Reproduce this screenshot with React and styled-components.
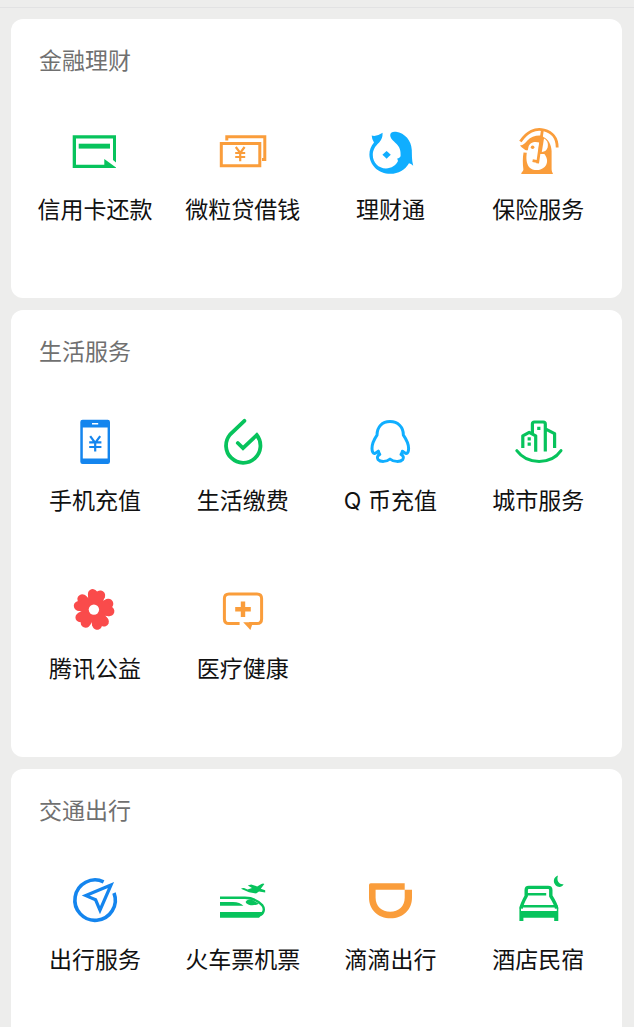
import styled, { createGlobalStyle } from "styled-components"

const GREEN = "#07c35c";
const ORANGE = "#fa9d3b";
const BLUE = "#1485ee";
const SKY = "#10aeff";
const RED = "#fa4b4b";

const GlobalStyle = createGlobalStyle`
    * {
        box-sizing: border-box;
    }
    body {
        margin: 0;
        background-color: #ededec;
        font-family: Inter, "Noto Sans CJK SC", sans-serif;
    }
`;
const Container = styled.main`
    display: flex;
    flex-direction: column;
    gap: 12px;
    padding: 0 12px 0 11px;
`;
const TopBar = styled.div`
    height: 8px;
    margin: 0 -12px -1px -11px;
    border-bottom: 1px solid #e2e2e3;
`;
const Card = styled.section`
    padding: 0 10px 10px;
    background-color: white;
    border-radius: 12px;
`;
const Title = styled.h2`
    height: 101px;
    margin: 0;
    padding: 24px 18px 0;
    color: #707070;
    font-size: 23px;
    font-weight: 400;
    line-height: 36px;
`;
const Grid = styled.nav`
    display: grid;
    grid-template-columns: repeat(4, 1fr);
`;
const Item = styled.a`
    height: 168px;
    display: flex;
    flex-direction: column;
    align-items: center;
    gap: 12px;
    color: #111;
    font-size: 23px;
    line-height: 36px;
    white-space: nowrap;
    text-decoration: none;
`;
const Icon = styled.svg`
    width: 60px;
    height: 60px;
    flex: none;
    color: ${(props) => props.$color};
    fill: none;
    stroke: currentColor;
    stroke-width: 3;

    .solid {
        fill: currentColor;
        stroke: none;
    }
    .hole {
        fill: white;
        stroke: none;
    }
`;

const CardIcon = () => (
    <>
        <path className="solid" d="M7.7 15.3H51V42.4L48 40V18.4H11V44.8H39.3V39L51 47.6V48H7.7Z" />
        <path className="solid" d="M13.7 23.7H45V28.6H13.7Z" />
    </>
);
const LoanIcon = () => (
    <>
        <path d="M8.3 23.6H46.8V45.8H8.3Z" />
        <path d="M13.8 20.5V16.8H51.8V39.4H49" />
        <path strokeWidth="2.2" d="M22.8 27L27.2 33L31.6 27M27.2 33V41.2M22.2 33H32.2M22.2 37H32.2" />
    </>
);
const WealthIcon = () => (
    <>
        <path className="solid" d="M11.7 15.6Q17 16.8 22.6 12.8Q22.8 18.6 19.2 22.6C15.4 26 12.8 30 12.8 35C12.8 42.6 18.4 48.4 26 48.4C31.4 48.4 36 45.4 38 41L37.2 38.6Q39 38.8 40.6 36.2C40.8 30.4 39.8 27.4 36.6 24C33 20.4 30.2 18.4 30.2 15C30.4 12.2 33 11.4 36 11.8C45 13.2 51.4 20.6 51.8 30C52 35 51.6 40 53.2 45.8Q51 43.4 49 43.2C45.2 49.8 38.4 53.8 30.4 53.8C18.4 53.8 9.6 45 9.4 34.4C9.4 30 11 25.8 14 22.4Q11.8 19.4 11.7 15.6Z" />
        <path className="solid" d="M26.6 31L28.6 32.8L30.8 34.8L28.6 36.8L26.6 38.8L24.6 36.8L22.4 34.8L24.6 32.8Z" />
    </>
);
const InsuranceIcon = () => (
    <>
        <path d="M12.4 21.6C18.6 11.8 27.4 7.6 36 10C44.4 12.2 49.2 18.6 49.2 27.4" strokeWidth="2.8" />
        <path className="solid" d="M12 25.6C15.4 25.2 17.4 23 19.4 20.6C23 16.6 28 15 34 15.6L35.4 17C40.4 19.4 43.4 24.6 43.6 31V49C43.6 51.4 44.4 52 45 54H13.2C13.2 52 15.4 51.4 15.4 49.4C14.6 43.6 14.6 37.4 15.6 32.2L18.6 31C16.4 29.6 14.2 28 12 25.6Z" />
        <path className="hole" d="M20.4 27.2C21.4 22.6 26.6 21 31.4 22.6L30 34H36.4C40 38.4 40 43.6 36.6 47C32.4 51.2 25 51 21.2 47.2C18.2 43.4 18 38 18.8 32.8L15.4 32.6V30.4L19.8 30.2Z" />
        <path className="hole" d="M36 18.6C39.6 20.4 40.4 24 39.6 27.4C38.8 30.2 37 31.6 33.8 32Z" />
        <path d="M34.4 10L29.6 43.4M24.6 40.6L30 41.6" strokeWidth="2.8" />
        <circle className="solid" cx="24.6" cy="27.2" r="1.8" />
    </>
);
const PhoneIcon = () => (
    <>
        <path className="solid" fillRule="evenodd" d="M17.6 8.7H42.7Q45 8.7 45 11V50.7Q45 53 42.7 53H17.6Q15.3 53 15.3 50.7V11Q15.3 8.7 17.6 8.7ZM17.8 16.4V47.4H42.6V16.4ZM27 11.9V13.4H33.2V11.9Z" />
        <path strokeWidth="2.2" d="M25.2 25.2L30.2 32L35.2 25.2M30.2 32V40.4M24.2 31.4H36.4M24.2 36H36.4" />
    </>
);
const BillIcon = () => (
    <path strokeWidth="3.8" strokeLinecap="round" d="M31.4 9.8L17 23.6A17.2 17.2 0 1 0 43.8 24L30 37.2L24.8 32" />
);
const QqIcon = () => (
    <path strokeLinejoin="round" d="M30 10.6C22.2 10.6 17 15.8 17 24.2C14.4 28 12 32.4 12 37.4C12 40.8 13.2 42.6 14.8 42.4C16 42.2 17 41.4 18.4 40.2C18.6 41.4 19 42.4 19.8 43.4C17.4 44.6 16.8 46.6 18 48.4C20.4 51.2 26.6 51 30 48C33.4 51 40.4 51.2 42.8 48.4C44 46.6 43.4 44.6 41 43.4C41.8 42.4 42.2 41.4 42.4 40.2C43.8 41.4 44.8 42.2 46 42.4C47.6 42.6 48.6 40.8 48.6 37.4C48.6 32.4 46 28 43.4 24.2C43.4 15.8 37.8 10.6 30 10.6Z" />
);
const CityIcon = () => (
    <>
        <path strokeLinecap="round" strokeLinejoin="round" d="M8.8 39.6C19.4 54 43 54 53 39.6" />
        <path strokeLinejoin="round" strokeWidth="3.2" d="M14.8 37V24.8L21.2 21.4L27.7 24.8V40.8M24.4 22V13Q24.4 11 26.4 11H35.3Q37.3 11 37.3 13V40.6M37.3 17.8L46.6 22.6V37" />
        <path className="solid" d="M29.2 15.8H32.4V19H29.2ZM19.6 26.2H22.8V29.4H19.6ZM19.6 31.6H22.8V34.8H19.6Z" />
    </>
);
const FlowerIcon = () => (
    <>
        {[10, 82, 154, 226, 298].map((angle) => (
            <g key={angle} className="solid" transform={`translate(28.9 30.6) rotate(${angle})`}>
                <circle cx="-3.8" cy="-15.2" r="4.9" />
                <circle cx="3.8" cy="-15.2" r="4.9" />
                <path d="M-8.6 -14L0 -16.4L8.6 -14L5 0H-5Z" />
            </g>
        ))}
        <circle className="hole" cx="28.9" cy="30.6" r="5.2" />
    </>
);
const MedicalIcon = () => (
    <>
        <path d="M26.6 44.6H16Q11.4 44.6 11.4 40V19.6Q11.4 15 16 15H44Q48.6 15 48.6 19.6V40Q48.6 44.6 44 44.6H36" />
        <path className="solid" d="M30.2 43.2H40L37.4 51Z" />
        <path strokeWidth="4.4" d="M30 22.4V38M22.2 30.2H37.8" />
    </>
);
const TravelIcon = () => (
    <>
        <path strokeWidth="3.6" d="M38.6 11.8A20.2 20.2 0 1 0 49 23" />
        <path strokeWidth="3.2" d="M46 15L20.8 25.6L30.6 29.8L35 40.2Z" />
    </>
);
const TrainIcon = () => (
    <>
        <path strokeWidth="2.4" d="M7 27.8H32C39 27.8 45.4 31 49.4 35.4C52 38.6 50.8 44.2 46.6 45" />
        <path className="solid" d="M7 42H49.6L48.2 45.6L46 47.8H7ZM7 32H20Q27 32.2 30.4 35.8H7Z" />
        <path className="solid" d="M32.6 32Q34 29.2 38 29.2L46 33.8Q42 35.6 37.6 35.2Q33.6 34.6 32.6 32Z" />
        <path className="solid" d="M28 18.8Q29.4 17.6 31 18L34.6 19.4L39 18L34.8 15.4L38.2 14.4L44.2 16.4L48.4 14Q50.2 13.2 51.4 14L47.8 18.8L52.2 20.2V22.4L46 21.4L43 23.4L36 22.2Z" />
    </>
);
const DidiIcon = () => (
    <path className="solid" fillRule="evenodd" d="M10.8 13.3H44.7V19.7H52V27.4C52 39.6 43 48.3 30.7 48.3C18 48.3 9 39.6 9 27.4V15.1Q9 13.3 10.8 13.3ZM15.6 19.7V27.8C15.6 36.4 21.8 41.8 30.2 41.8C38.6 41.8 44.7 36.4 44.7 27.8V19.7Z" />
);
const HotelIcon = () => (
    <>
        <path strokeWidth="3.4" d="M13.2 38.6Q13.4 34.6 18.2 26V20Q18.2 17.4 20.8 17.4H40.2Q42.8 17.4 42.8 20V26Q48.2 34.6 48.6 38.6" />
        <path strokeWidth="2.6" d="M18 24.2H38.2M13.4 36.2H48.4" />
        <path className="solid" d="M11.4 38Q11.6 35.6 13 34.6V41H48.8V34.6Q50.2 36 50.3 38V51H46.2V47.8H15.4V51H11.4Z" />
        <path className="hole" d="M14.4 40.6Q14.8 38 18 38H43.6Q47 38 47.4 40.6Z" />
        <path className="solid" d="M50 5.6C45.6 7 44.6 12 47.6 15.2C50.4 18 54 17.2 55.6 14.2C50.8 15 48.2 10.4 50 5.6Z" />
    </>
);

const sections = [
    {
        title: "金融理财",
        items: [
            { name: "信用卡还款", color: GREEN, Drawing: CardIcon },
            { name: "微粒贷借钱", color: ORANGE, Drawing: LoanIcon },
            { name: "理财通", color: SKY, Drawing: WealthIcon },
            { name: "保险服务", color: ORANGE, Drawing: InsuranceIcon },
        ],
    },
    {
        title: "生活服务",
        items: [
            { name: "手机充值", color: BLUE, Drawing: PhoneIcon },
            { name: "生活缴费", color: GREEN, Drawing: BillIcon },
            { name: "Q 币充值", color: SKY, Drawing: QqIcon },
            { name: "城市服务", color: GREEN, Drawing: CityIcon },
            { name: "腾讯公益", color: RED, Drawing: FlowerIcon },
            { name: "医疗健康", color: ORANGE, Drawing: MedicalIcon },
        ],
    },
    {
        title: "交通出行",
        items: [
            { name: "出行服务", color: BLUE, Drawing: TravelIcon },
            { name: "火车票机票", color: GREEN, Drawing: TrainIcon },
            { name: "滴滴出行", color: ORANGE, Drawing: DidiIcon },
            { name: "酒店民宿", color: GREEN, Drawing: HotelIcon },
        ],
    },
];

const App = () => {
    return (
        <>
            <GlobalStyle />
            <Container>
                <TopBar />
                {sections.map((section) => (
                    <Card key={section.title}>
                        <Title>{section.title}</Title>
                        <Grid aria-label={section.title}>
                            {section.items.map(({ name, color, Drawing }) => (
                                <Item key={name} href="#">
                                    <Icon $color={color} viewBox="0 0 60 60" aria-hidden="true">
                                        <Drawing />
                                    </Icon>
                                    {name}
                                </Item>
                            ))}
                        </Grid>
                    </Card>
                ))}
            </Container>
        </>
    )
}

export default App
